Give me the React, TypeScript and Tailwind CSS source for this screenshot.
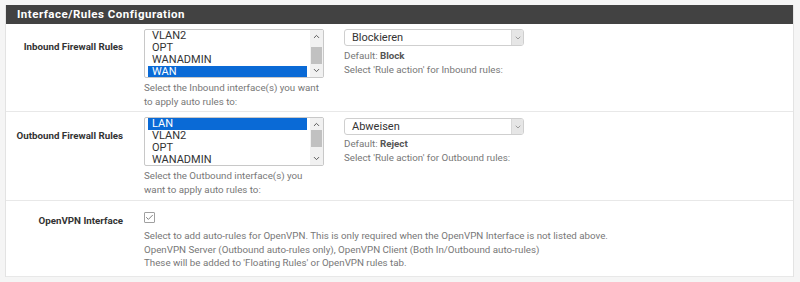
import { Check, ChevronDown, ChevronUp } from "lucide-react";

const font = { fontFamily: "Roboto, 'Liberation Sans', sans-serif" };

function ListBox({ items, selected }: { items: string[]; selected: string }) {
  return (
    <div className="flex h-[49px] w-[180px] rounded-[2px] border border-[#c8c8c8] bg-white">
      <div className="flex-1 overflow-hidden pl-[3px] pr-[3px]">
        {items.map((item) => (
          <div
            key={item}
            className={
              "h-[12px] pl-[4px] text-[11px] leading-[12px] " +
              (item === selected ? "bg-[#0a6ad6] text-white" : "text-[#333]")
            }
          >
            {item}
          </div>
        ))}
      </div>
      <div className="flex w-[13px] flex-col items-center bg-[#f1f1f1]">
        <ChevronUp size={9} strokeWidth={2.5} className="mt-[2px] text-[#505050]" />
        <div className={"h-[17px] w-[11px] bg-[#c1c1c1] " + (selected === "LAN" ? "mt-[1px]" : "mt-[6px]")} />
        <div className="flex-1" />
        <ChevronDown size={9} strokeWidth={2.5} className="mb-[2px] text-[#505050]" />
      </div>
    </div>
  );
}

function Select({ value }: { value: string }) {
  return (
    <div className="flex h-[17px] w-[180px] items-center rounded-[3px] border border-[#cfcfcf] bg-white">
      <span className="flex-1 pl-[7px] text-[11px] text-[#333]">{value}</span>
      <div className="flex h-full w-[12px] items-center justify-center rounded-r-[2px] border-l border-[#d8d8d8] bg-[#e6e6e6]">
        <ChevronDown size={8} strokeWidth={2} className="text-[#777]" />
      </div>
    </div>
  );
}

function Label({ children, pt }: { children: string; pt: string }) {
  return (
    <div className={"w-[117px] shrink-0 text-right text-[9.75px] font-bold text-[#333] " + pt}>
      {children}
    </div>
  );
}

export default function App() {
  return (
    <div className="h-[282px] w-[800px] overflow-hidden bg-[#f5f5f5] pl-[5px] pt-[5px]" style={font}>
      <div className="w-[789px] border-x border-[#e3e3e3] bg-white">
        <div className="flex h-[19px] items-center bg-[#424242] pl-[11px] text-[11.5px] font-bold tracking-[0.5px] text-white">
          Interface/Rules Configuration
        </div>

        <div className="flex h-[88px] border-b border-[#e8e8e8] pt-[5px]">
          <Label pt="pt-[11px]">Inbound Firewall Rules</Label>
          <div className="ml-[21px] w-[200px]">
            <ListBox items={["VLAN2", "OPT", "WANADMIN", "WAN"]} selected="WAN" />
            <p className="mt-[3px] w-[180px] text-[9.75px] leading-[14px] text-[#777]">
              Select the Inbound interface(s) you want to apply auto rules to:
            </p>
          </div>
          <div className="text-[9.75px] leading-[14px] text-[#777]">
            <Select value="Blockieren" />
            <p className="mt-[3px]">
              Default: <b className="text-[#555]">Block</b>
            </p>
            <p>Select 'Rule action' for Inbound rules:</p>
          </div>
        </div>

        <div className="flex h-[89px] border-b border-[#e8e8e8] pt-[5px]">
          <Label pt="pt-[12px]">Outbound Firewall Rules</Label>
          <div className="ml-[21px] w-[200px]">
            <ListBox items={["LAN", "VLAN2", "OPT", "WANADMIN"]} selected="LAN" />
            <p className="mt-[3px] w-[180px] text-[9.75px] leading-[14px] text-[#777]">
              Select the Outbound interface(s) you want to apply auto rules to:
            </p>
          </div>
          <div className="pt-[1px] text-[9.75px] leading-[14px] text-[#777]">
            <Select value="Abweisen" />
            <p className="mt-[2px]">
              Default: <b className="text-[#555]">Reject</b>
            </p>
            <p>Select 'Rule action' for Outbound rules:</p>
          </div>
        </div>

        <div className="flex h-[76px] border-b border-[#e8e8e8] pt-[11px]">
          <Label pt="pt-[2px]">OpenVPN Interface</Label>
          <div className="ml-[21px]">
            <div className="flex h-[11px] w-[11px] items-center justify-center rounded-[1px] border border-[#a0a0a0] bg-white">
              <Check size={9} strokeWidth={2} className="text-[#555]" />
            </div>
            <div className="mt-[6px] text-[9.75px] leading-[13.5px] text-[#777]">
              <p>Select to add auto-rules for OpenVPN. This is only required when the OpenVPN Interface is not listed above.</p>
              <p>OpenVPN Server (Outbound auto-rules only), OpenVPN Client (Both In/Outbound auto-rules)</p>
              <p>These will be added to 'Floating Rules' or OpenVPN rules tab.</p>
            </div>
          </div>
        </div>
      </div>
    </div>
  );
}
